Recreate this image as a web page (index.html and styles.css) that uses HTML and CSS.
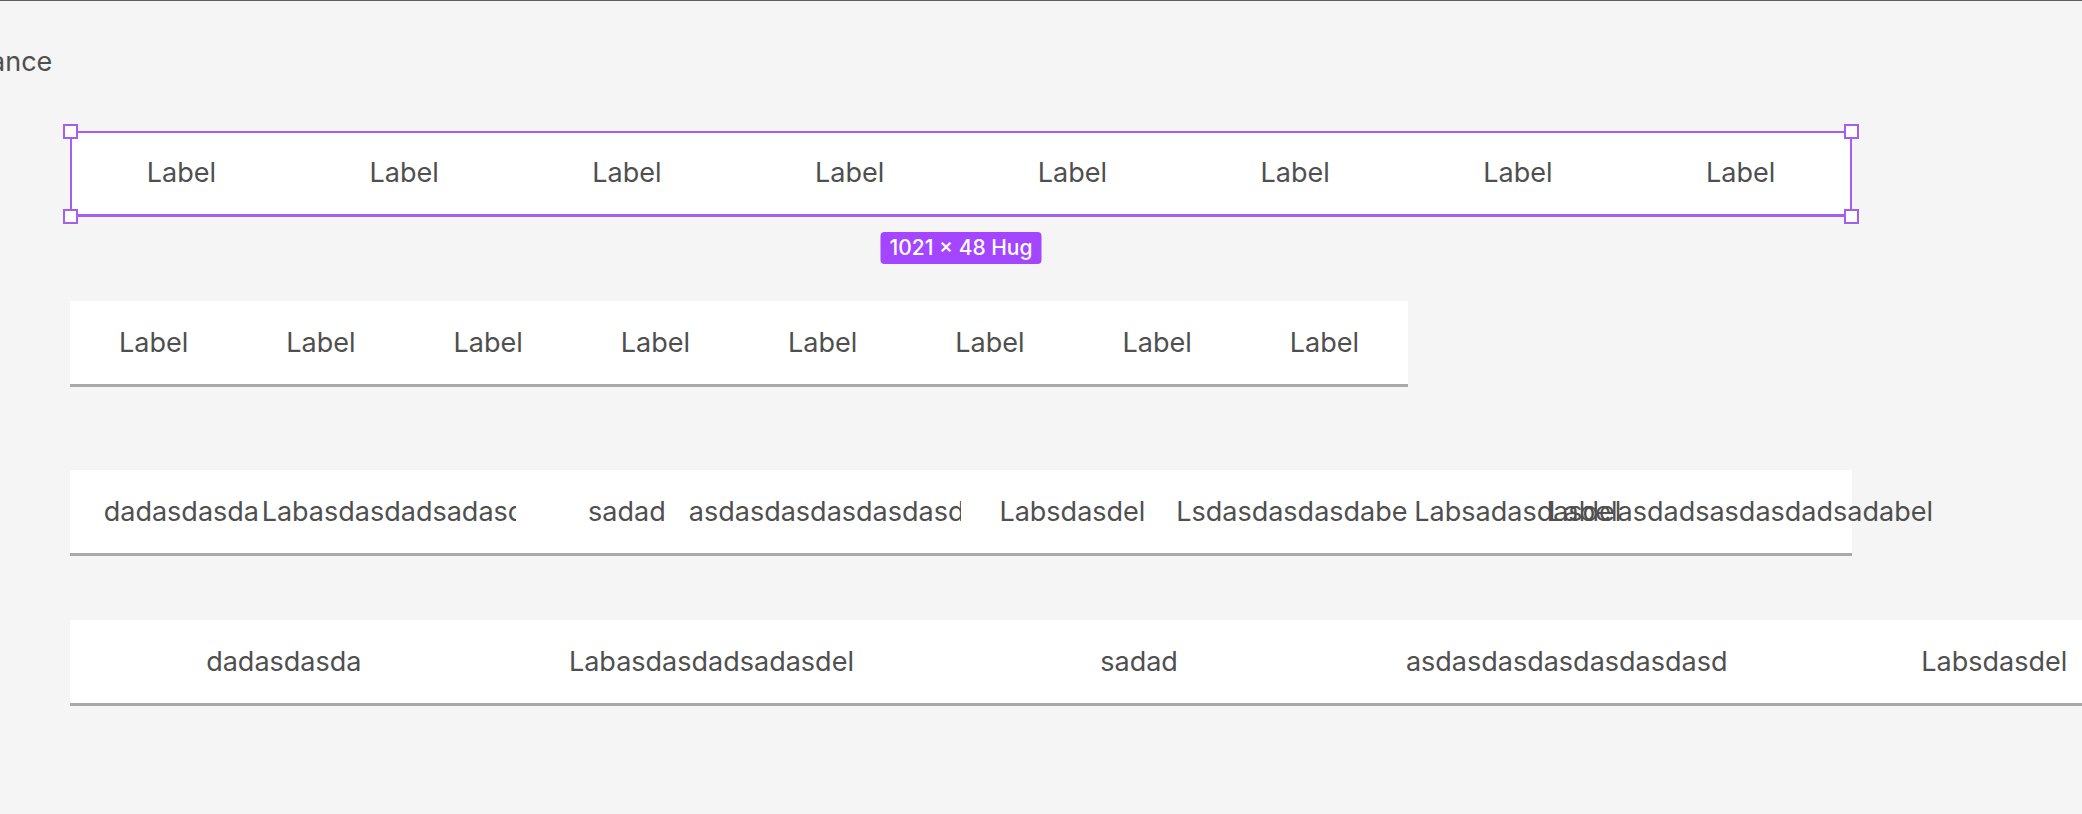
FILE: index.html
```html
<!DOCTYPE html>
<html lang="en">

<head>
    <meta charset="UTF-8">
    <meta name="viewport" content="width=device-width, initial-scale=1.0">
    <title>Tabs</title>
    <link rel="stylesheet" href="styles.css">
</head>

<body>

    <div class="canvas">
        <div class="section-title">Appearance</div>

        <!-- selected frame -->
        <div class="selection">
            <div class="tabs tabs-fill">
                <div class="tab"><span>Label</span></div>
                <div class="tab"><span>Label</span></div>
                <div class="tab"><span>Label</span></div>
                <div class="tab"><span>Label</span></div>
                <div class="tab"><span>Label</span></div>
                <div class="tab"><span>Label</span></div>
                <div class="tab"><span>Label</span></div>
                <div class="tab"><span>Label</span></div>
            </div>
            <span class="handle top-left"></span>
            <span class="handle top-right"></span>
            <span class="handle bottom-left"></span>
            <span class="handle bottom-right"></span>
            <div class="size-badge">1021 × 48 Hug</div>
        </div>

        <div class="tabs tabs-hug">
            <div class="tab"><span>Label</span></div>
            <div class="tab"><span>Label</span></div>
            <div class="tab"><span>Label</span></div>
            <div class="tab"><span>Label</span></div>
            <div class="tab"><span>Label</span></div>
            <div class="tab"><span>Label</span></div>
            <div class="tab"><span>Label</span></div>
            <div class="tab"><span>Label</span></div>
        </div>

        <div class="tabs tabs-fill">
            <div class="tab"><span>dadasdasda</span></div>
            <div class="tab"><span>Labasdasdadsadasdel</span></div>
            <div class="tab"><span>sadad</span></div>
            <div class="tab"><span>asdasdasdasdasdasdasd</span></div>
            <div class="tab"><span>Labsdasdel</span></div>
            <div class="tab"><span>Lsdasdasdasdabel</span></div>
            <div class="tab"><span>Labsadasdasdel</span></div>
            <div class="tab"><span>Labelasdadsasdasdadsadabel</span></div>
        </div>

        <div class="tabs tabs-hug tabs-last">
            <div class="tab"><span>dadasdasda</span></div>
            <div class="tab"><span>Labasdasdadsadasdel</span></div>
            <div class="tab"><span>sadad</span></div>
            <div class="tab"><span>asdasdasdasdasdasdasd</span></div>
            <div class="tab"><span>Labsdasdel</span></div>
        </div>
    </div>

</body>

</html>
```

FILE: styles.css
```css
html,
body {
    margin: 0;
    height: 100%;
    overflow: hidden;
}

body {
    font-family: 'Inter', 'Noto Sans', sans-serif;
    background-color: #f5f5f5;
    color: #4f4f4f;
}

.canvas {
    border-top: 1px solid #5e5e5e;
    padding-left: 70px;
}

.section-title {
    font-size: 27px;
    line-height: 33px;
    margin-top: 44px;
    margin-left: -173px;
    white-space: nowrap;
}

/* tab bars */
.tabs {
    background-color: #ffffff;
    border-bottom: 3px solid #a9a9a9;
    font-size: 27px;
}

.tabs-fill {
    display: grid;
    grid-template-columns: repeat(8, minmax(0, 1fr));
    width: 1782px;
}

.tabs-hug {
    display: grid;
    grid-auto-flow: column;
    grid-auto-columns: 1fr;
    width: max-content;
}

.tab {
    height: 83px;
    min-width: 0;
    display: flex;
    align-items: center;
    justify-content: center;
    background-color: #ffffff;
    white-space: nowrap;
}

.tabs-hug .tab {
    padding: 0 49px;
}

.tabs-last .tab {
    padding: 0 53px;
}

.selection + .tabs {
    margin-top: 84px;
}

.tabs + .tabs {
    margin-top: 83px;
}

.tabs + .tabs-last {
    margin-top: 64px;
}

/* selection overlay */
.selection {
    position: relative;
    width: 1782px;
    margin-top: 53px;
}

.selection::after {
    content: '';
    position: absolute;
    inset: 0;
    border: 2px solid #a55ef2;
    border-bottom-width: 3px;
    pointer-events: none;
}

.handle {
    position: absolute;
    width: 11px;
    height: 11px;
    background-color: #ffffff;
    border: 2px solid #a55ef2;
    z-index: 1;
}

.handle.top-left {
    top: -7px;
    left: -7px;
}

.handle.top-right {
    top: -7px;
    right: -7px;
}

.handle.bottom-left {
    bottom: -7px;
    left: -7px;
}

.handle.bottom-right {
    bottom: -7px;
    right: -7px;
}

.size-badge {
    position: absolute;
    top: calc(100% + 15px);
    left: 50%;
    transform: translateX(-50%);
    background-color: #a445ff;
    color: #ffffff;
    font-size: 21px;
    font-weight: 500;
    line-height: 32px;
    padding: 0 9px;
    border-radius: 4px;
    white-space: nowrap;
}
```
